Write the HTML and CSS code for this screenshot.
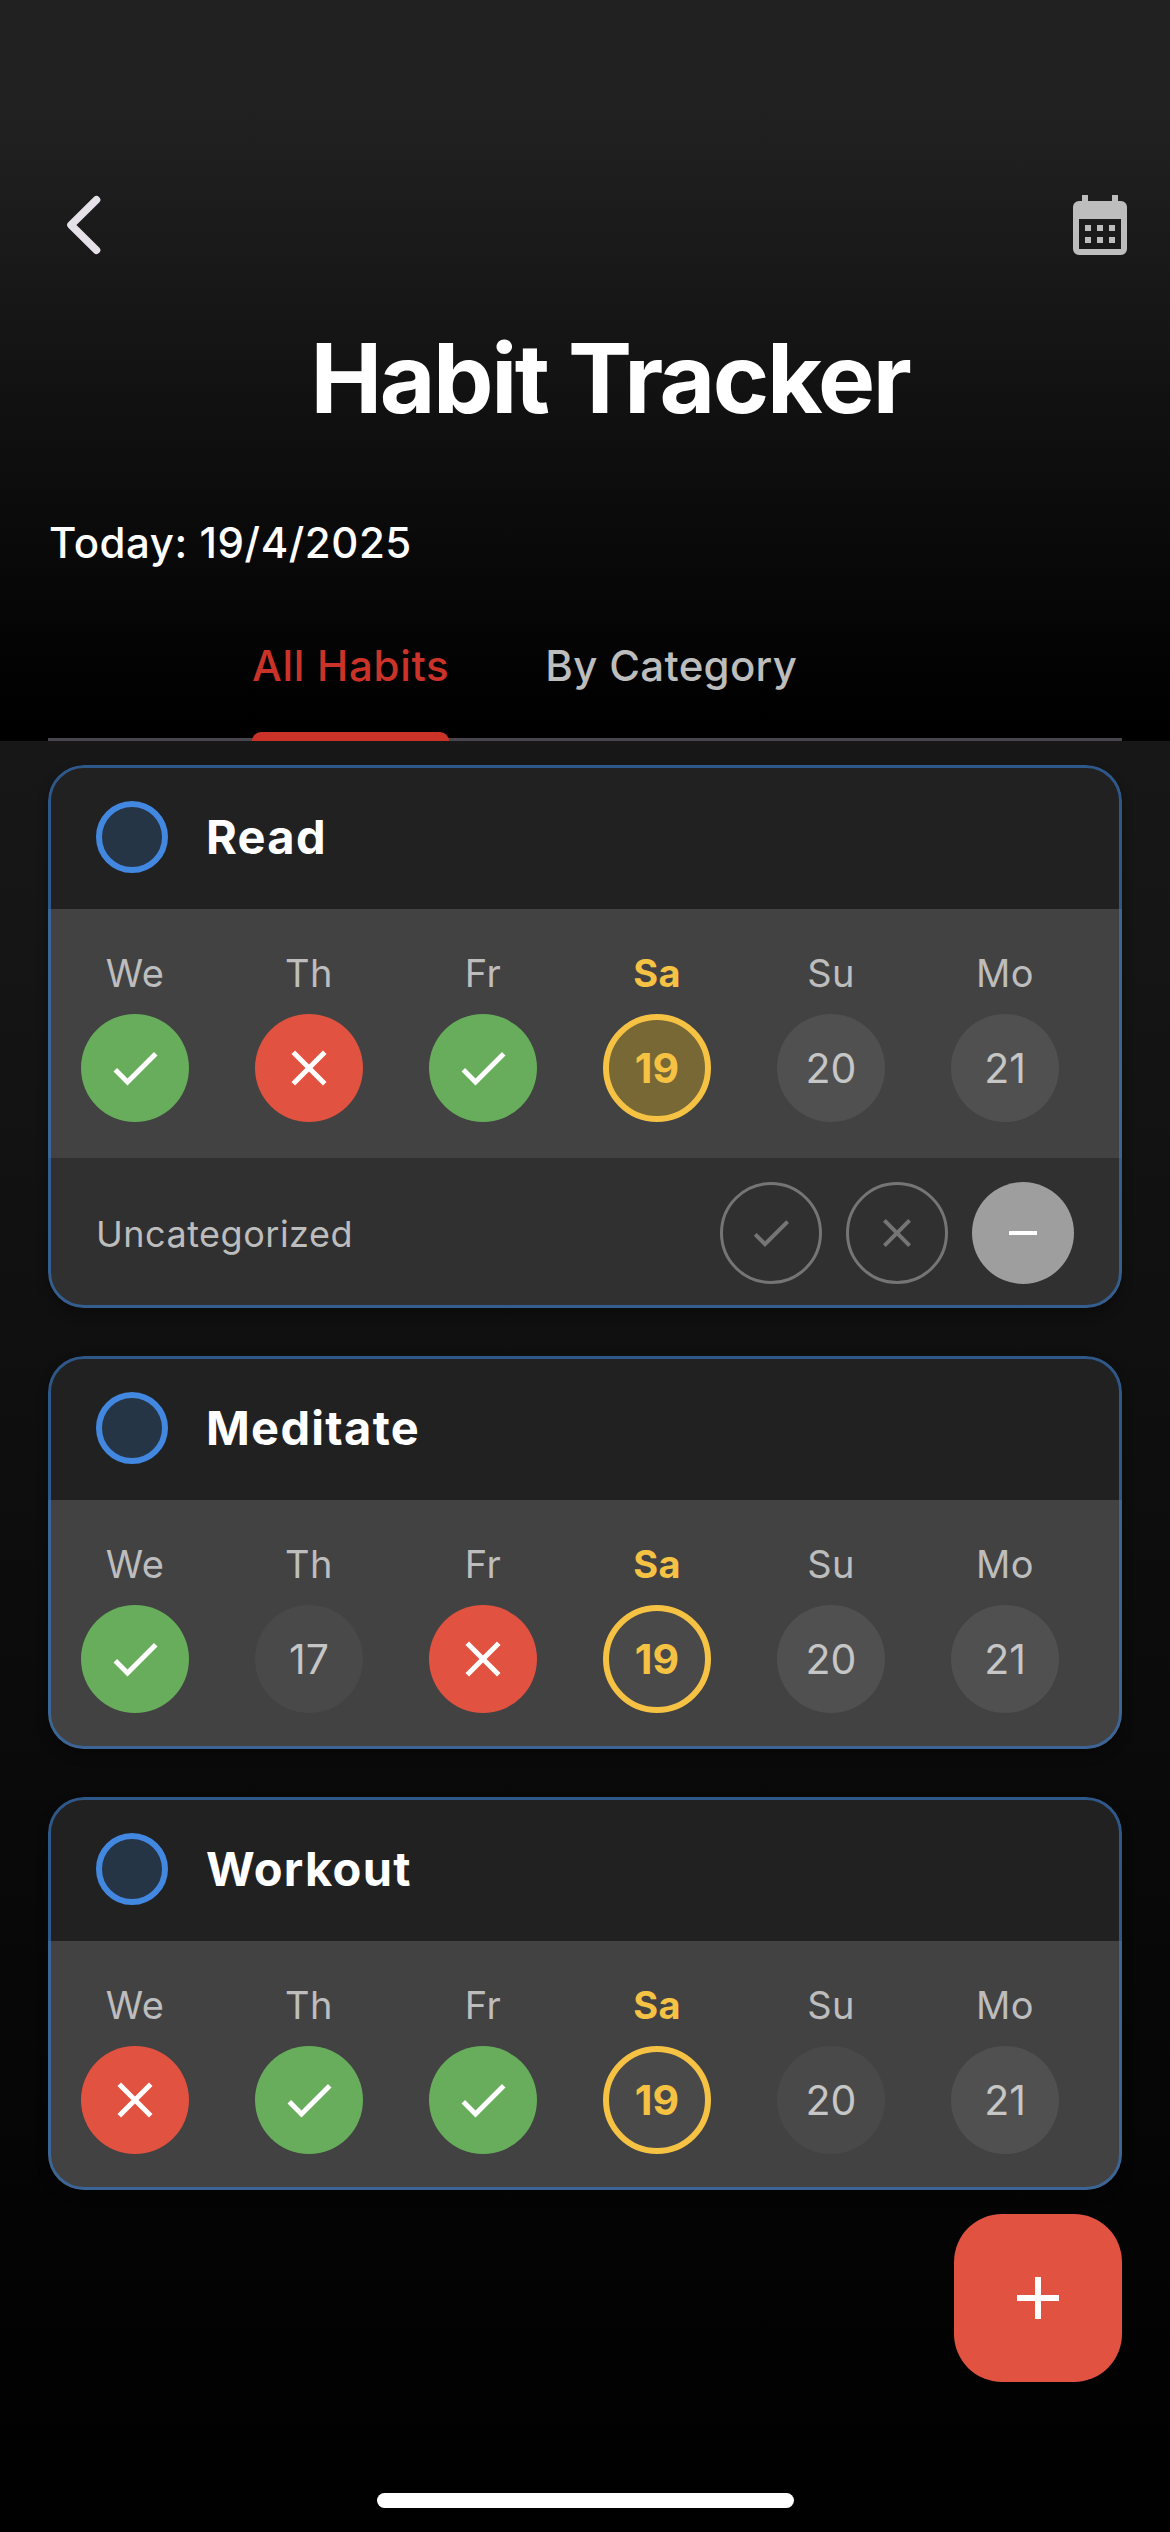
FILE: index.html
```html
<!DOCTYPE html>
<html lang="en">
<head>
<meta charset="utf-8">
<title>Habit Tracker</title>
<link rel="stylesheet" href="styles.css">
</head>
<body>
<svg class="sprite" width="0" height="0">
  <symbol id="check" viewBox="0 0 24 24"><path d="M9 16.17 4.83 12l-1.42 1.41L9 19 21 7l-1.41-1.41z"/></symbol>
  <symbol id="close" viewBox="0 0 24 24"><path d="M19 6.41 17.59 5 12 10.59 6.41 5 5 6.41 10.59 12 5 17.59 6.41 19 12 13.41 17.59 19 19 17.59 13.41 12z"/></symbol>
  <symbol id="minus" viewBox="0 0 24 24"><path d="M19 13H5v-2h14z"/></symbol>
  <symbol id="plus" viewBox="0 0 24 24"><path d="M19 13h-6v6h-2v-6H5v-2h6V5h2v6h6z"/></symbol>
</svg>
<div class="app">
  <header class="header">
    <div class="toolbar">
      <svg class="back" viewBox="0 0 90 90"><path d="M56.500 19.800 31 45l25.500 25.200"/></svg>
      <svg class="calendar" viewBox="0 0 54 60"><path fill-rule="evenodd" d="M9 0h6v6h24V0h6v6h3a6 6 0 0 1 6 6v42a6 6 0 0 1-6 6H6a6 6 0 0 1-6-6V12a6 6 0 0 1 6-6h3zM6 24v30h42V24z"/><path d="M12 30h6v6h-6zm12 0h6v6h-6zm12 0h6v6h-6zM12 42h6v6h-6zm12 0h6v6h-6zm12 0h6v6h-6z"/></svg>
    </div>
    <h1 class="title">Habit Tracker</h1>
    <p class="today">Today: 19/4/2025</p>
    <nav class="tabs">
      <a class="tab tab-active">All Habits</a>
      <a class="tab">By Category</a>
    </nav>
  </header>
  <main class="habits">
    <section class="card">
      <div class="card-head"><span class="ring"></span><h2 class="name">Read</h2></div>
      <div class="week">
        <div class="day"><span class="label">We</span><span class="dot done"><svg class="mark"><use href="#check"/></svg></span></div>
        <div class="day"><span class="label">Th</span><span class="dot missed"><svg class="mark"><use href="#close"/></svg></span></div>
        <div class="day"><span class="label">Fr</span><span class="dot done"><svg class="mark"><use href="#check"/></svg></span></div>
        <div class="day current"><span class="label">Sa</span><span class="dot selected">19</span></div>
        <div class="day"><span class="label">Su</span><span class="dot">20</span></div>
        <div class="day"><span class="label">Mo</span><span class="dot">21</span></div>
      </div>
      <div class="card-foot">
        <span class="category">Uncategorized</span>
        <div class="actions">
          <span class="action"><svg class="action-icon"><use href="#check"/></svg></span>
          <span class="action"><svg class="action-icon"><use href="#close"/></svg></span>
          <span class="action action-on"><svg class="action-icon"><use href="#minus"/></svg></span>
        </div>
      </div>
    </section>
    <section class="card">
      <div class="card-head"><span class="ring"></span><h2 class="name">Meditate</h2></div>
      <div class="week">
        <div class="day"><span class="label">We</span><span class="dot done"><svg class="mark"><use href="#check"/></svg></span></div>
        <div class="day"><span class="label">Th</span><span class="dot faint">17</span></div>
        <div class="day"><span class="label">Fr</span><span class="dot missed"><svg class="mark"><use href="#close"/></svg></span></div>
        <div class="day current"><span class="label">Sa</span><span class="dot">19</span></div>
        <div class="day"><span class="label">Su</span><span class="dot">20</span></div>
        <div class="day"><span class="label">Mo</span><span class="dot">21</span></div>
      </div>
    </section>
    <section class="card">
      <div class="card-head"><span class="ring"></span><h2 class="name">Workout</h2></div>
      <div class="week">
        <div class="day"><span class="label">We</span><span class="dot missed"><svg class="mark"><use href="#close"/></svg></span></div>
        <div class="day"><span class="label">Th</span><span class="dot done"><svg class="mark"><use href="#check"/></svg></span></div>
        <div class="day"><span class="label">Fr</span><span class="dot done"><svg class="mark"><use href="#check"/></svg></span></div>
        <div class="day current"><span class="label">Sa</span><span class="dot">19</span></div>
        <div class="day"><span class="label">Su</span><span class="dot faint">20</span></div>
        <div class="day"><span class="label">Mo</span><span class="dot">21</span></div>
      </div>
    </section>
  </main>
  <footer class="bottom">
    <button class="fab"><svg class="fab-icon"><use href="#plus"/></svg></button>
    <div class="home-bar"></div>
  </footer>
</div>
</body>
</html>
```
FILE: styles.css
```css
* { box-sizing: border-box; margin: 0; padding: 0; }
body { background: #000; font-family: Inter, "Liberation Sans", sans-serif; }
.sprite { position: absolute; }
.app { width: 1170px; height: 2532px; display: flex; flex-direction: column; background: linear-gradient(#212121, #000); }

.header { height: 741px; padding: 180px 48px 0; display: flex; flex-direction: column; background: linear-gradient(#212121 0%, #212121 15%, #000 97%); }
.toolbar { display: flex; justify-content: space-between; height: 90px; margin: 0 -5px 0 -8px; }
.back { width: 90px; height: 90px; fill: none; stroke: #e6e0e9; stroke-width: 7.6; stroke-linecap: round; stroke-linejoin: round; }
.calendar { width: 54px; height: 60px; margin-top: 15px; fill: #bdbdbd; }
.title { margin-top: 48px; padding-left: 50px; height: 120px; line-height: 120px; text-align: center; color: #fff; font-size: 96px; font-weight: 700; letter-spacing: -2.4px; }
.today { margin-top: 75px; padding-left: 1px; height: 60px; line-height: 60px; color: #fff; font-size: 42px; font-weight: 500; letter-spacing: .55px; white-space: nowrap; }
.tabs { margin-top: 48px; height: 120px; display: flex; gap: 96px; padding-left: 204px; border-bottom: 3px solid #49454f; }
.tab { height: 120px; display: flex; flex-direction: column; justify-content: space-between; line-height: 90px; color: #bdbdbd; font-size: 42px; font-weight: 500; letter-spacing: .3px; white-space: nowrap; }
.tab-active { color: #cc3328; letter-spacing: .7px; }
.tab-active::after { content: ""; height: 9px; background: #cc3328; border-radius: 9px 9px 0 0; }

.habits { padding: 24px 48px 0; display: flex; flex-direction: column; gap: 48px; }
.card { position: relative; border-radius: 36px; overflow: hidden; background: #212121; box-shadow: 0 6px 12px rgba(0, 0, 0, .3); }
.card::after { content: ""; position: absolute; inset: 0; border: 3px solid rgba(56, 125, 208, .6); border-radius: 36px; }
.card-head { height: 144px; padding: 0 48px; display: flex; align-items: center; gap: 38px; }
.ring { width: 72px; height: 72px; border: 6px solid #4287e0; border-radius: 50%; background: #263546; }
.name { padding-bottom: 2px; color: #fff; font-size: 47px; font-weight: 700; letter-spacing: 1.3px; }
.week { height: 249px; padding: 39px 33px 0; display: flex; gap: 66px; background: #424242; }
.day { width: 108px; display: flex; flex-direction: column; align-items: center; gap: 15px; }
.label { height: 51px; line-height: 51px; color: #bdbdbd; font-size: 38px; letter-spacing: .4px; }
.dot { width: 108px; height: 108px; padding-bottom: 1px; border-radius: 50%; display: flex; align-items: center; justify-content: center; background: #505050; color: #c6c6c6; font-size: 41px; }
.faint { background: #494949; }
.done { padding: 0; background: #67ad5b; }
.missed { padding: 0; background: #e15241; }
.current .label { color: #f6c244; font-weight: 700; }
.current .dot { border: 6px solid #f6c244; background: #494949; color: #f6c244; font-weight: 700; }
.current .selected { background: #776836; }
.mark { width: 60px; height: 60px; fill: #fff; }
.card-foot { height: 150px; padding: 0 48px; display: flex; align-items: center; justify-content: space-between; background: #303030; }
.category { padding-top: 2px; color: #bdbdbd; font-size: 36px; letter-spacing: .5px; }
.actions { display: flex; gap: 24px; }
.action { width: 102px; height: 102px; border: 3px solid #757575; border-radius: 50%; display: flex; align-items: center; justify-content: center; }
.action-icon { width: 48px; height: 48px; fill: #757575; }
.action-on { border: 0; background: #9e9e9e; }
.action-on .action-icon { fill: #fff; }

.bottom { flex: 1; padding: 24px 48px 24px; display: flex; flex-direction: column; justify-content: space-between; }
.fab { align-self: flex-end; width: 168px; height: 168px; border: 0; border-radius: 48px; background: #e15241; display: flex; align-items: center; justify-content: center; }
.fab-icon { width: 72px; height: 72px; fill: #fff; }
.home-bar { align-self: center; width: 417px; height: 15px; border-radius: 8px; background: #fff; }
```
